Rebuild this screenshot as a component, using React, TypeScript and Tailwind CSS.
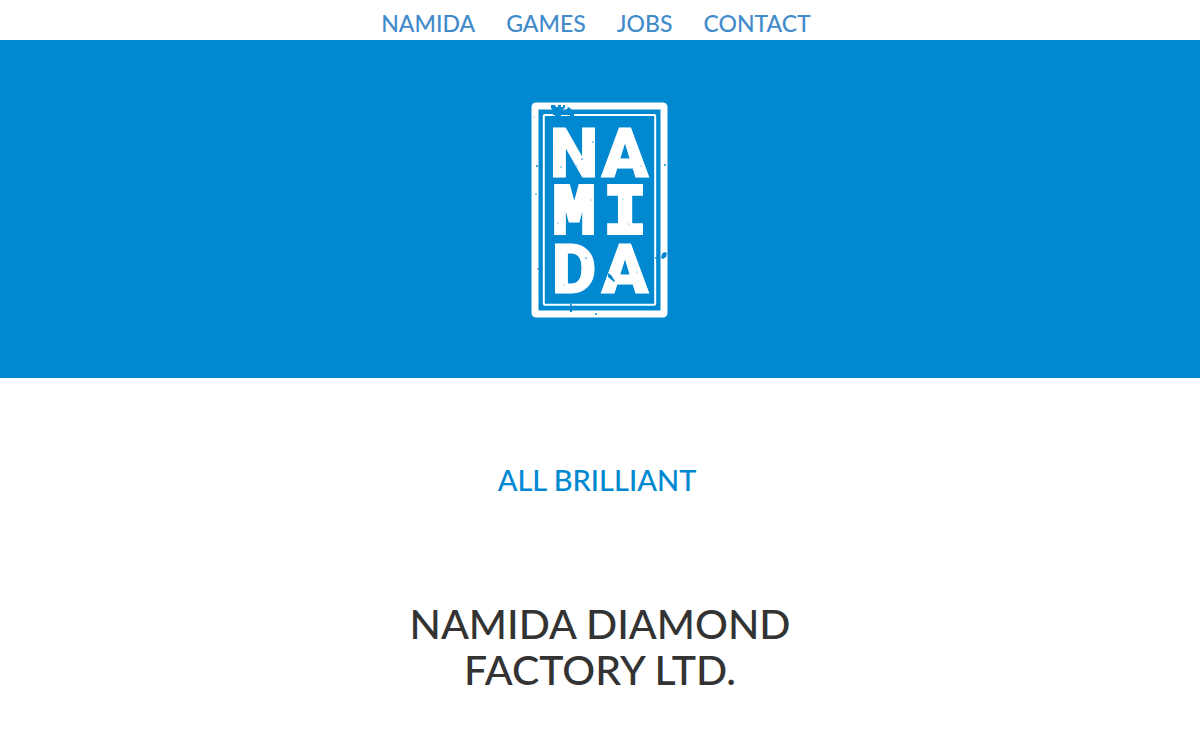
const links = ["Namida", "Games", "Jobs", "Contact"];

function Logo() {
  return (
    <svg viewBox="0 0 138 216" className="h-[216px] w-[138px]" role="img" aria-label="Namida logo">
      <rect x="4" y="4" width="129" height="208" fill="none" stroke="#fff" strokeWidth="7" rx="1" />
      <rect x="12.8" y="13" width="111.4" height="189.8" rx="1" fill="none" stroke="#fff" strokeWidth="2" />
      <g fill="#fff" stroke="#fff" textAnchor="middle" strokeLinejoin="miter">
        <g className="font-['Roboto'] font-black" fontSize="69" strokeWidth="1">
          <text x="43" y="75">N</text>
          <text x="94" y="75">A</text>
          <text x="43" y="191">D</text>
          <text x="94" y="191">A</text>
        </g>
        <g className="font-['Liberation_Mono'] font-bold" fontSize="71" strokeWidth="4">
          <text x="43" y="131">M</text>
          <text x="94" y="131">I</text>
        </g>
      </g>
      <g fill="#0088d1">
        <path d="M20 3h4l1 2h2V3h3v2h2V3h2v3l-2 1v2h2l2-2 1-2 2 1 2 2 1 2h1v4h-4v-1h-9v2h-6v-2h-2v-3h2V8h-2l-2-2z" />
        <path d="M131 152l2-2 3 1-1 4-3 2-2-1z" />
        <path d="M77 171l3 2 4 6-1 1-6-5z" />
        <circle cx="6" cy="64" r="1" />
        <circle cx="125" cy="156" r="1" />
        <circle cx="134" cy="63" r="1" />
        <circle cx="40" cy="209" r="1.2" />
        <circle cx="40" cy="203" r="1" />
        <circle cx="65" cy="212" r="1" />
        <circle cx="7" cy="167" r=".8" />
        <circle cx="5" cy="92" r=".8" />
        <circle cx="3" cy="15" r=".5" />
        <circle cx="51" cy="57" r=".8" />
        <circle cx="46" cy="64" r=".6" />
        <circle cx="30" cy="65" r=".7" />
        <circle cx="62" cy="40" r=".7" />
        <circle cx="104" cy="31" r=".5" />
        <circle cx="110" cy="64" r=".5" />
        <circle cx="27" cy="121" r=".6" />
        <circle cx="60" cy="98" r=".5" />
        <circle cx="92" cy="97" r=".5" />
        <circle cx="98" cy="122" r=".5" />
        <circle cx="55" cy="156" r=".8" />
        <circle cx="33" cy="183" r=".5" />
        <circle cx="106" cy="170" r=".5" />
      </g>
    </svg>
  );
}

export default function App() {
  return (
    <div className="bg-white text-center font-['Lato',sans-serif] font-medium uppercase">
      <nav className="flex h-10 items-end justify-center gap-[31px] pr-2 text-[23px] leading-[34px] text-[#428bca]">
        {links.map((label) => (
          <a key={label} href={`#${label.toLowerCase()}`}>
            {label}
          </a>
        ))}
      </nav>
      <header className="flex justify-center bg-[#0088d1] pt-[62px] pb-15">
        <Logo />
      </header>
      <main className="px-4">
        <h2 className="pt-20 pr-1.5 text-[29px] leading-11 text-[#0088d1]">All brilliant</h2>
        <h1 className="mx-auto max-w-[420px] pt-[99px] pb-10 text-[41px] leading-[46px] text-[#333]">
          Namida Diamond Factory Ltd.
        </h1>
      </main>
    </div>
  );
}
